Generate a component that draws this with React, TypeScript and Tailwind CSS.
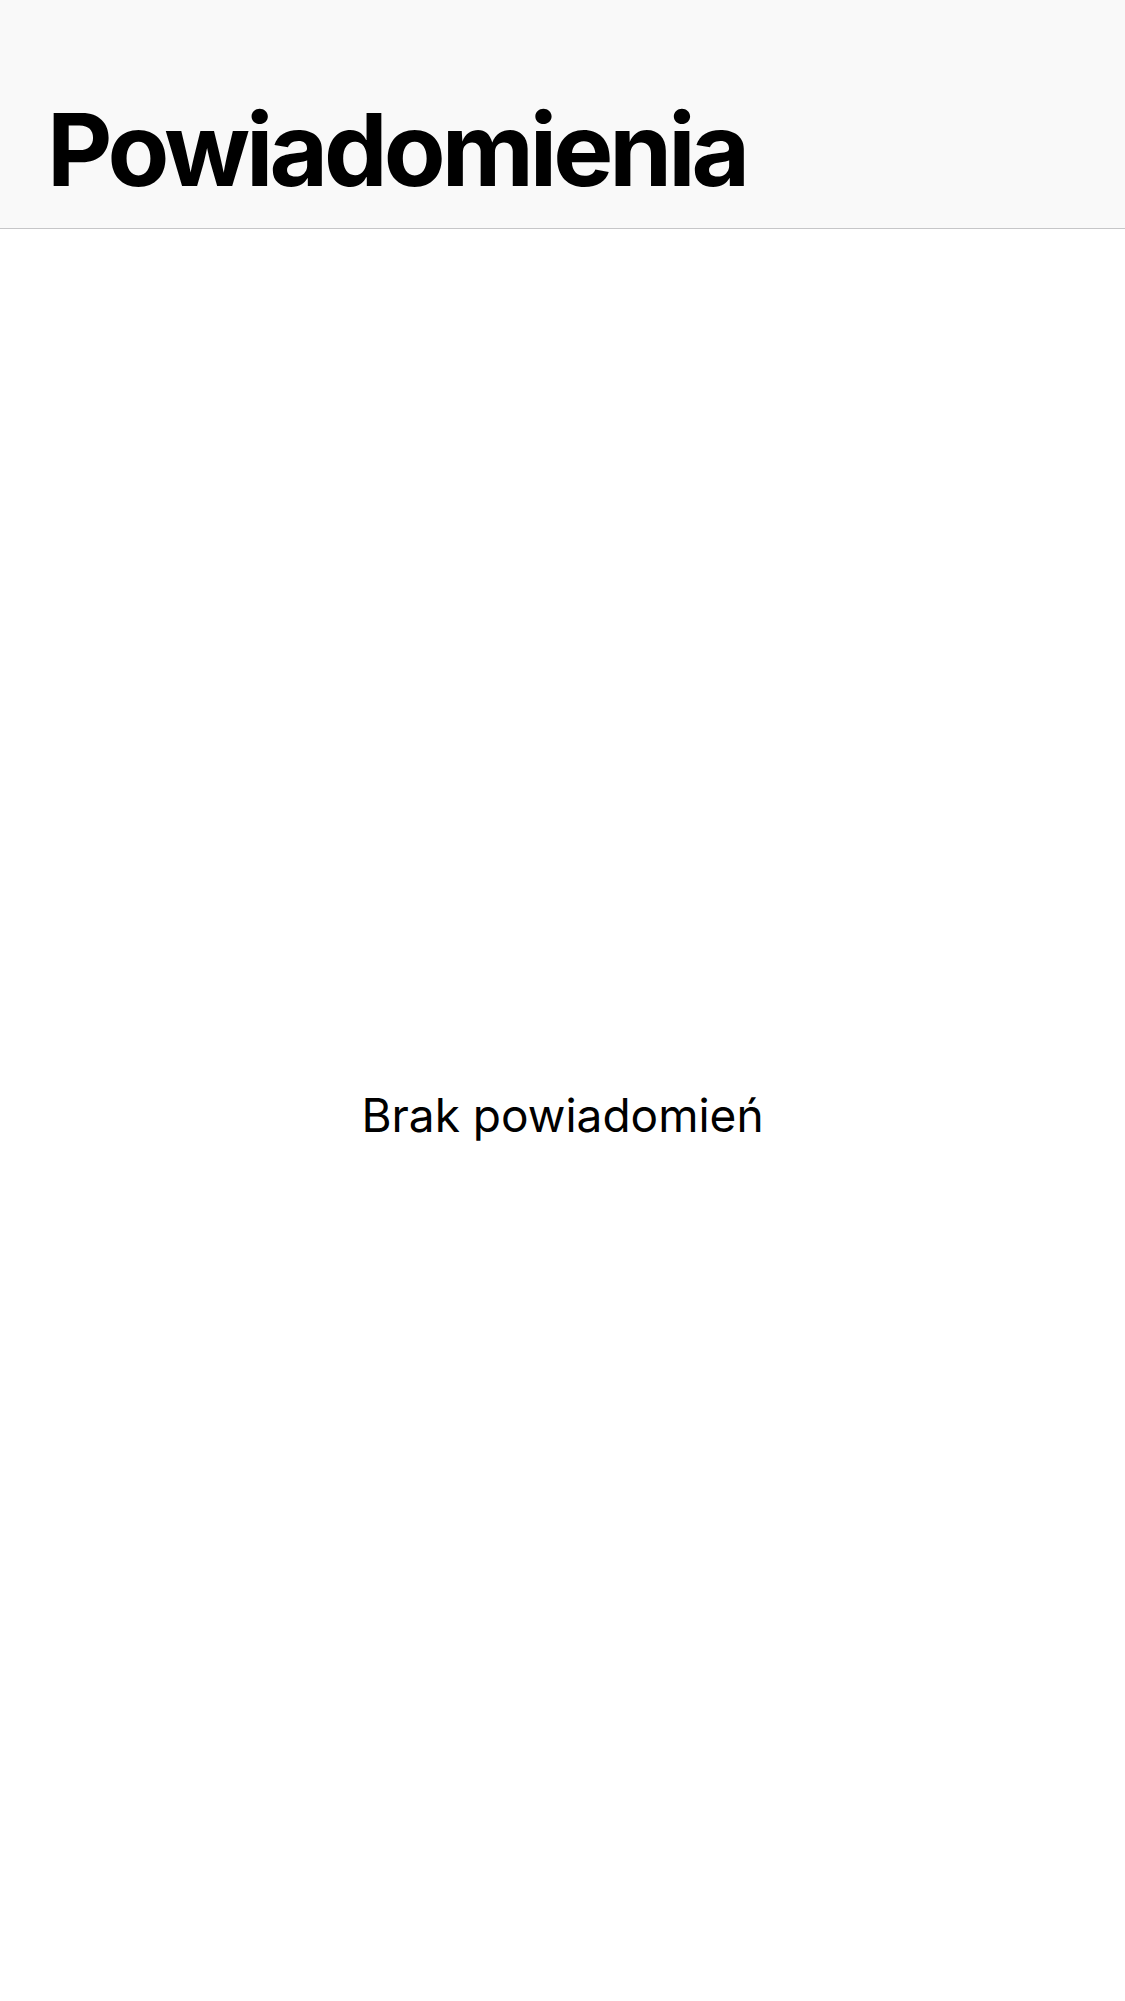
export default function App() {
  return (
    <div className="flex min-h-[2001px] flex-col bg-white text-black" style={{ fontFamily: "Inter, 'Noto Sans', sans-serif" }}>
      <header className="flex h-[229px] shrink-0 items-end border-b border-[#c6c6c8] bg-[#f9f9f9] px-[47px] pb-[28px]">
        <h1 className="text-[101px] font-bold leading-none tracking-[-4px]">Powiadomienia</h1>
      </header>
      <main className="flex flex-1 items-center justify-center">
        <p className="text-[46px] leading-none">Brak powiadomień</p>
      </main>
    </div>
  );
}
